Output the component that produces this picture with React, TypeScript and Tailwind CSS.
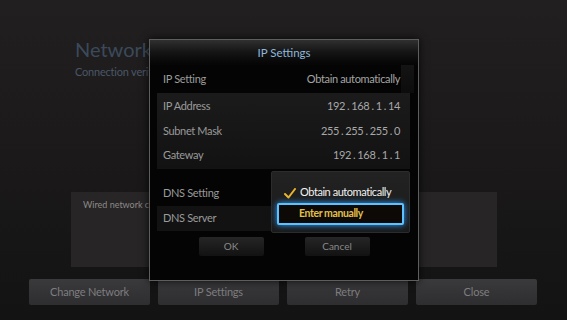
import React from 'react';

const font = { fontFamily: 'Lato, "Noto Sans", sans-serif' };

const bottomButtons = ['Change Network', 'IP Settings', 'Retry', 'Close'];

const addressRows = [
  { label: 'IP Address', value: '192.168.1.14' },
  { label: 'Subnet Mask', value: '255.255.255.0' },
  { label: 'Gateway', value: '192.168.1.1' },
];

/** The TV puts a small gap either side of each dot. */
function Address({ value }: { value: string }) {
  const parts = value.split('.');
  return (
    <span className="flex text-[#a8a8a8]">
      {parts.map((p, i) => (
        <React.Fragment key={i}>
          {i > 0 && <span className="mx-[2px]">.</span>}
          <span>{p}</span>
        </React.Fragment>
      ))}
    </span>
  );
}

function Check() {
  return (
    <svg aria-hidden="true" width="12" height="11" viewBox="0 0 12 11" className="shrink-0">
      <path d="M1 6 L4.5 9.5 L11 1" fill="none" stroke="#e9b52c" strokeWidth="2" strokeLinecap="round" strokeLinejoin="round" />
    </svg>
  );
}

function DialogButton({ label }: { label: string }) {
  return (
    <div className="flex h-[19px] w-[65px] items-center justify-center rounded-[2px] bg-gradient-to-b from-[#262626] to-[#121212] text-[10px] text-[#8a8a8a]">
      {label}
    </div>
  );
}

export default function App() {
  return (
    <div
      className="relative h-[320px] w-[567px] overflow-hidden bg-gradient-to-b from-[#211f20] via-[#1b191a] to-[#131313]"
      style={font}
    >
      {/* screen behind the dialog */}
      <div className="flex flex-col">
        <div className="pl-[75px] pt-[37px]">
          <div className="text-[20px] leading-[24px] text-[#3b4a5a]">Network Status</div>
          <div className="mt-[4px] text-[11px] leading-[14px] tracking-[-0.2px] text-[#4a5766]">Connection verified.</div>
        </div>
        <div className="ml-[71px] mt-[113px] h-[75px] w-[426px] bg-[#272526] pl-[12px] pt-[6px] text-[9px] text-[#8c8a88]">
          Wired network connected.
        </div>
        <div className="ml-[29px] mt-[12px] flex gap-[8px]">
          {bottomButtons.map((b) => (
            <div
              key={b}
              className="flex h-[26px] w-[121px] items-center justify-center rounded-[2px] bg-gradient-to-b from-[#3a393b] to-[#2e2d2f] text-[11px] tracking-[-0.2px] text-[#7e7e80]"
            >
              {b}
            </div>
          ))}
        </div>
      </div>

      {/* IP settings dialog */}
      <div className="absolute left-[149px] top-[39px] flex h-[242px] w-[270px] flex-col border border-[#5e5e5e] bg-[#040404] tracking-[-0.35px] shadow-[0_0_8px_rgba(0,0,0,0.8)]">
        <div className="flex h-[25px] items-center justify-center bg-gradient-to-b from-[#303030] via-[#141414] to-[#050505] text-[11.5px] tracking-normal text-[#8fb6da]">
          IP Settings
        </div>
        <div className="flex h-[28px] items-center justify-between pl-[13px] pr-[4px] text-[11px]">
          <span className="text-[#9c9c9c]">IP Setting</span>
          <div className="flex h-full items-center">
            <span className="text-[#a4a4a4]">Obtain automatically</span>
            <div className="ml-[1px] h-full w-[13px] bg-gradient-to-b from-[#141414] to-[#0c0c0c]" />
          </div>
        </div>
        <div className="ml-[7px] mr-[8px] flex flex-col bg-gradient-to-b from-[#1b1b1b] to-[#121212] py-[1px]">
          {addressRows.map((r) => (
            <div key={r.label} className="flex h-[24.5px] items-center justify-between pl-[6px] pr-[10px] text-[11px]">
              <span className="text-[#9a9a9a]">{r.label}</span>
              <Address value={r.value} />
            </div>
          ))}
        </div>
        <div className="ml-[7px] mt-[13px] flex w-[114px] flex-col text-[11px] text-[#9a9a9a]">
          <div className="flex h-[24px] items-center pl-[6px]">DNS Setting</div>
          <div className="flex h-[25px] items-center bg-[#121212] pl-[6px]">DNS Server</div>
        </div>
        <div className="mt-[6px] flex justify-center gap-[41px] tracking-normal">
          <DialogButton label="OK" />
          <DialogButton label="Cancel" />
        </div>
      </div>

      {/* DNS setting dropdown */}
      <div className="absolute left-[271px] top-[171px] flex h-[62px] w-[139px] flex-col rounded-[2px] border border-[#2c2c2c] bg-gradient-to-b from-[#222222] to-[#1a1a1a] px-[5px]">
        <div className="flex h-[31px] items-end gap-[4px] pb-[4px] pl-[7px] text-[11px] tracking-[-0.45px] text-[#f2f2f2]">
          <Check />
          <span className="leading-[14px]">Obtain automatically</span>
        </div>
        <div className="flex h-[22px] items-center rounded-[2px] border-2 border-[#5cc2ff] bg-[#0c0906] pl-[20px] text-[10.5px] font-bold tracking-[-0.4px] text-[#e2c04c] shadow-[0_0_6px_#2f9cff]">
          Enter manually
        </div>
      </div>
    </div>
  );
}
